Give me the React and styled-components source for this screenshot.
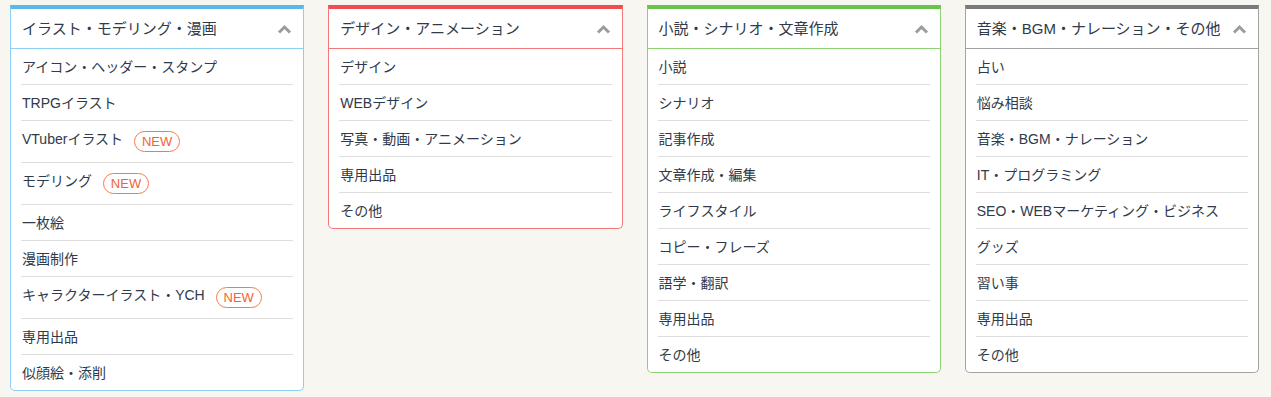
import styled, { createGlobalStyle } from "styled-components";

const GlobalStyle = createGlobalStyle`
  html, body {
    margin: 0;
    padding: 0;
    background-color: #f7f6f1;
  }
  body {
    font-family: "Liberation Sans", "Noto Sans CJK JP", sans-serif;
    color: #2f3a4a;
  }
`;

const Page = styled.div`
  display: grid;
  grid-template-columns: repeat(4, 1fr);
  column-gap: 24px;
  align-items: start;
  padding: 5px 12px 0 10px;
`;

const Card = styled.section`
  background-color: #ffffff;
  border: 1px solid ${(p) => p.$border};
  border-top: 4px solid ${(p) => p.$accent};
  border-radius: 0 0 5px 5px;
`;

const Header = styled.div`
  display: flex;
  align-items: center;
  justify-content: space-between;
  height: 39px;
  padding: 0 11px;
  border-bottom: 1px solid ${(p) => p.$border};
`;

const Title = styled.h2`
  margin: 0;
  font-size: 15px;
  font-weight: 400;
  line-height: 20px;
  white-space: nowrap;
  color: #2f3a4a;
`;

const Chevron = styled.svg`
  width: 15px;
  height: 10px;
  flex-shrink: 0;
  margin-top: 1px;
`;

const List = styled.ul`
  list-style: none;
  margin: 0;
  padding: 0 10px;
`;

const Item = styled.li`
  display: flex;
  align-items: flex-start;
  padding: 8px 1px 7px;
  font-size: 14px;
  line-height: 20px;
  border-bottom: 1px solid #dedede;

  &:last-child {
    border-bottom: none;
  }
`;

const Badge = styled.span`
  display: inline-flex;
  align-items: center;
  justify-content: center;
  box-sizing: border-box;
  width: 46px;
  height: 21px;
  margin: 2px 0 3px 11px;
  border: 1px solid #f47a4c;
  border-radius: 11px;
  font-size: 13px;
  line-height: 1;
  color: #f2642f;
`;

const categories = [
  {
    title: "イラスト・モデリング・漫画",
    accent: "#5ab7ec",
    border: "#8ccff2",
    items: [
      { label: "アイコン・ヘッダー・スタンプ" },
      { label: "TRPGイラスト" },
      { label: "VTuberイラスト", isNew: true },
      { label: "モデリング", isNew: true },
      { label: "一枚絵" },
      { label: "漫画制作" },
      { label: "キャラクターイラスト・YCH", isNew: true },
      { label: "専用出品" },
      { label: "似顔絵・添削" },
    ],
  },
  {
    title: "デザイン・アニメーション",
    accent: "#f04d50",
    border: "#f3787a",
    items: [
      { label: "デザイン" },
      { label: "WEBデザイン" },
      { label: "写真・動画・アニメーション" },
      { label: "専用出品" },
      { label: "その他" },
    ],
  },
  {
    title: "小説・シナリオ・文章作成",
    accent: "#67c34a",
    border: "#8fd176",
    items: [
      { label: "小説" },
      { label: "シナリオ" },
      { label: "記事作成" },
      { label: "文章作成・編集" },
      { label: "ライフスタイル" },
      { label: "コピー・フレーズ" },
      { label: "語学・翻訳" },
      { label: "専用出品" },
      { label: "その他" },
    ],
  },
  {
    title: "音楽・BGM・ナレーション・その他",
    accent: "#7a7a7a",
    border: "#a2a2a2",
    items: [
      { label: "占い" },
      { label: "悩み相談" },
      { label: "音楽・BGM・ナレーション" },
      { label: "IT・プログラミング" },
      { label: "SEO・WEBマーケティング・ビジネス" },
      { label: "グッズ" },
      { label: "習い事" },
      { label: "専用出品" },
      { label: "その他" },
    ],
  },
];

function ChevronUp() {
  return (
    <Chevron viewBox="0 0 15 10">
      <path
        d="M2 8.5 L7.5 3 L13 8.5"
        fill="none"
        stroke="#9c9c9c"
        strokeWidth="3"
        strokeLinecap="butt"
        strokeLinejoin="miter"
      />
    </Chevron>
  );
}

function CategoryCard({ category }) {
  return (
    <Card $accent={category.accent} $border={category.border}>
      <Header $border={category.border}>
        <Title>{category.title}</Title>
        <ChevronUp />
      </Header>
      <List>
        {category.items.map((item) => (
          <Item key={item.label}>
            <span>{item.label}</span>
            {item.isNew && <Badge>NEW</Badge>}
          </Item>
        ))}
      </List>
    </Card>
  );
}

export default function App() {
  return (
    <>
      <GlobalStyle />
      <Page>
        {categories.map((category) => (
          <CategoryCard key={category.title} category={category} />
        ))}
      </Page>
    </>
  );
}
